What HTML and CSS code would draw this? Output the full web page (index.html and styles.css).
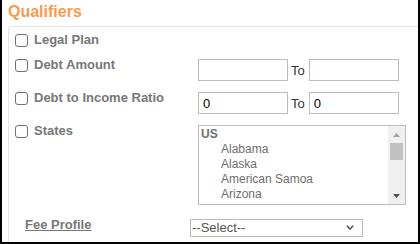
FILE: index.html
```html
<!DOCTYPE html>
<html lang="en">
<head>
    <meta charset="UTF-8">
    <meta name="viewport" content="width=device-width, initial-scale=1.0">
    <title>Qualifiers</title>
    <link rel="stylesheet" href="styles.css">
</head>
<body>
    <div class="panel">
        <h3 class="title">Qualifiers</h3>

        <div class="group">
            <!-- Legal plan -->
            <div class="row row-plain">
                <label class="check"><input type="checkbox"><span>Legal Plan</span></label>
            </div>

            <!-- Debt amount -->
            <div class="row">
                <label class="check"><input type="checkbox"><span>Debt Amount</span></label>
                <div class="range">
                    <input type="text" class="field">
                    <span class="to">To</span>
                    <input type="text" class="field">
                </div>
            </div>

            <!-- Debt to income -->
            <div class="row">
                <label class="check"><input type="checkbox"><span>Debt to Income Ratio</span></label>
                <div class="range">
                    <input type="text" class="field" value="0">
                    <span class="to">To</span>
                    <input type="text" class="field" value="0">
                </div>
            </div>

            <!-- States -->
            <div class="row row-states">
                <label class="check"><input type="checkbox"><span>States</span></label>
                <div class="listbox">
                    <div class="list">
                        <div class="group-name">US</div>
                        <div class="option">Alabama</div>
                        <div class="option">Alaska</div>
                        <div class="option">American Samoa</div>
                        <div class="option">Arizona</div>
                    </div>
                    <div class="scrollbar">
                        <div class="scroll-btn">
                            <svg width="7" height="4" viewBox="0 0 7 4"><polygon points="3.5,0 7,4 0,4" fill="#a3a3a3"/></svg>
                        </div>
                        <div class="track"><div class="thumb"></div></div>
                        <div class="scroll-btn">
                            <svg width="7" height="4" viewBox="0 0 7 4"><polygon points="0,0 7,0 3.5,4" fill="#505050"/></svg>
                        </div>
                    </div>
                </div>
            </div>

            <!-- Fee profile -->
            <div class="row row-fee">
                <a href="#" class="fee-link">Fee Profile</a>
                <div class="select-wrap">
                    <select class="select">
                        <option>--Select--</option>
                    </select>
                    <svg class="chevron" width="8" height="5" viewBox="0 0 8 5"><polyline points="0.8,0.8 4,4 7.2,0.8" fill="none" stroke="#555" stroke-width="1.6"/></svg>
                </div>
            </div>
        </div>
    </div>
</body>
</html>
```

FILE: styles.css
```css
body {
    margin: 0;
    font-family: "Liberation Sans", Arial, sans-serif;
    background-color: #fff;
}
.panel {
    width: 420px;
    height: 244px;
    box-sizing: border-box;
    border: 2px solid #000;
    border-top: none;
    overflow: hidden;
    display: flex;
    flex-direction: column;
}
.title {
    margin: 0;
    padding: 2px 0 4px 6px;
    font-size: 16px;
    line-height: 20px;
    font-weight: bold;
    color: #f99a4e;
}
.group {
    flex: 1;
    margin-left: 6px;
    padding: 7px 0 0 6px;
    border-top: 1px solid #e3e3e3;
    border-left: 1px solid #e3e3e3;
    border-top-left-radius: 4px;
}
.row {
    display: flex;
    align-items: flex-start;
    margin-bottom: 11px;
}
.row-plain {
    min-height: 14px;
}
.row-states {
    margin-bottom: 13px;
}
.check {
    width: 183px;
    display: flex;
    align-items: flex-start;
    font-size: 13px;
    font-weight: bold;
    color: #777;
}
.check span {
    margin-left: 6px;
    line-height: 13px;
    margin-top: -1px;
}
.check input {
    appearance: none;
    width: 13px;
    height: 13px;
    margin: 0;
    border: 1px solid #707070;
    border-radius: 3px;
    background-color: #fff;
}
.range {
    display: flex;
    align-items: center;
}
.field {
    width: 90px;
    height: 22px;
    box-sizing: border-box;
    margin: 0;
    padding: 0 4px;
    border: 1px solid #bcbcbc;
    font-family: "Liberation Sans", Arial, sans-serif;
    font-size: 13px;
    color: #000;
}
.to {
    margin: 0 4px 0 3px;
    font-size: 13px;
    color: #333;
}
.listbox {
    width: 208px;
    height: 80px;
    box-sizing: border-box;
    border: 1px solid #bcbcbc;
    display: flex;
}
.list {
    flex: 1;
    overflow: hidden;
    padding: 1px 0 0 2px;
    font-size: 12px;
    color: #6e6e6e;
}
.group-name {
    font-weight: bold;
    line-height: 14px;
    padding-bottom: 1px;
}
.option {
    padding-left: 20px;
    line-height: 14px;
    padding-bottom: 1px;
}
.scrollbar {
    width: 17px;
    display: flex;
    flex-direction: column;
    background-color: #f0f0f0;
}
.scroll-btn {
    height: 17px;
    display: flex;
    align-items: center;
    justify-content: center;
}
.track {
    flex: 1;
}
.thumb {
    height: 17px;
    margin: 0 2px;
    background-color: #c1c1c1;
}
.row-fee {
    padding-left: 10px;
}
.fee-link {
    width: 165px;
    font-size: 13px;
    line-height: 13px;
    font-weight: bold;
    color: #777;
}
.select-wrap {
    position: relative;
}
.select {
    appearance: none;
    width: 173px;
    height: 18px;
    margin: 0;
    padding: 0 1px;
    border: 1px solid #bcbcbc;
    border-radius: 0;
    background-color: #fff;
    font-family: "Liberation Sans", Arial, sans-serif;
    font-size: 13px;
    color: #555;
}
.chevron {
    position: absolute;
    right: 9px;
    top: 7px;
}
```
